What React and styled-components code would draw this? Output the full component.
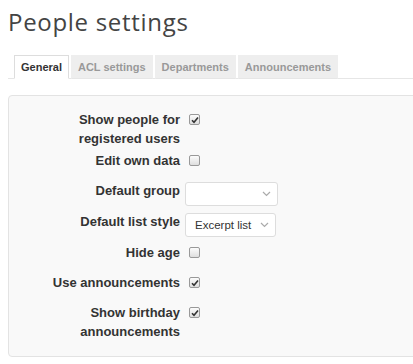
import styled, { createGlobalStyle } from "styled-components";

const GlobalStyle = createGlobalStyle`
  html, body {
    margin: 0;
    overflow: hidden;
    background: #fff;
  }
  body {
    padding: 8px;
    font-family: "Liberation Sans", Arial, sans-serif;
  }
`;

const Page = styled.div`
  width: 720px;
`;

const Title = styled.h1`
  margin: 0;
  font-family: "Open Sans", "DejaVu Sans", sans-serif;
  font-weight: 400;
  font-size: 24px;
  letter-spacing: 0.7px;
  line-height: 28px;
  color: #444;
`;

const TabBar = styled.div`
  display: flex;
  gap: 2px;
  margin-top: 19px;
  padding-left: 6px;
  border-bottom: 1px solid #e6e6e6;
`;

const Tab = styled.div`
  height: 22px;
  padding: 0 6px;
  margin-bottom: -1px;
  display: flex;
  align-items: center;
  font-size: 11px;
  font-weight: bold;
  color: ${(p) => (p.$active ? "#333" : "#999")};
  background: ${(p) => (p.$active ? "#fff" : "#eee")};
  border: 1px solid ${(p) => (p.$active ? "#ddd" : "#eee")};
  border-bottom-color: ${(p) => (p.$active ? "#fff" : "#e6e6e6")};
`;

const Panel = styled.div`
  margin-top: 16px;
  padding: 14px 0 12px 21px;
  background: #f9f9f9;
  border: 1px solid #e3e3e3;
  border-radius: 4px;
`;

const Row = styled.div`
  display: flex;
  align-items: flex-start;
  gap: 5px;
  min-height: ${(p) => (p.$tall ? 31 : 30)}px;
  padding-bottom: 3px;
  box-sizing: border-box;
`;

const Label = styled.div`
  width: 150px;
  text-align: right;
  font-size: 13px;
  font-weight: bold;
  line-height: 19px;
  color: #333;
`;

const Box = styled.span`
  display: flex;
  align-items: center;
  justify-content: center;
  width: 11px;
  height: 11px;
  margin: 4px 0 0 4px;
  box-sizing: border-box;
  border: 1px solid #999;
  border-radius: 2px;
  background: linear-gradient(#fcfcfc, #dedede);
`;

const Select = styled.div`
  display: flex;
  align-items: center;
  justify-content: space-between;
  width: ${(p) => p.$width}px;
  height: 24px;
  margin-top: 1px;
  padding: 0 6px 0 9px;
  box-sizing: border-box;
  background: #fff;
  border: 1px solid #ddd;
  border-radius: 3px;
  font-size: 11.5px;
  color: #333;
`;

const Check = ({ checked }) => (
  <Box>
    {checked && (
      <svg width="8" height="8" viewBox="0 0 8 8">
        <path d="M1 4.2 L3 6.3 L7 1.5" fill="none" stroke="#333" strokeWidth="1.6" />
      </svg>
    )}
  </Box>
);

const Chevron = () => (
  <svg width="9" height="6" viewBox="0 0 9 6">
    <path d="M1 1 L4.5 4.5 L8 1" fill="none" stroke="#aaa" strokeWidth="1.2" />
  </svg>
);

const rows = [
  { label: "Show people for registered users", type: "check", checked: true },
  { label: "Edit own data", type: "check", checked: false },
  { label: "Default group", type: "select", value: "", width: 93 },
  { label: "Default list style", type: "select", value: "Excerpt list", width: 91 },
  { label: "Hide age", type: "check", checked: false },
  { label: "Use announcements", type: "check", checked: true },
  { label: "Show birthday announcements", type: "check", checked: true },
];

const tabs = ["General", "ACL settings", "Departments", "Announcements"];

export default function App() {
  return (
    <Page>
      <GlobalStyle />
      <Title>People settings</Title>
      <TabBar>
        {tabs.map((t, i) => (
          <Tab key={t} $active={i === 0}>
            {t}
          </Tab>
        ))}
      </TabBar>
      <Panel>
        {rows.map((r) => (
          <Row key={r.label} $tall={r.type === "select"}>
            <Label>{r.label}</Label>
            {r.type === "check" ? (
              <Check checked={r.checked} />
            ) : (
              <Select $width={r.width}>
                <span>{r.value}</span>
                <Chevron />
              </Select>
            )}
          </Row>
        ))}
      </Panel>
    </Page>
  );
}
